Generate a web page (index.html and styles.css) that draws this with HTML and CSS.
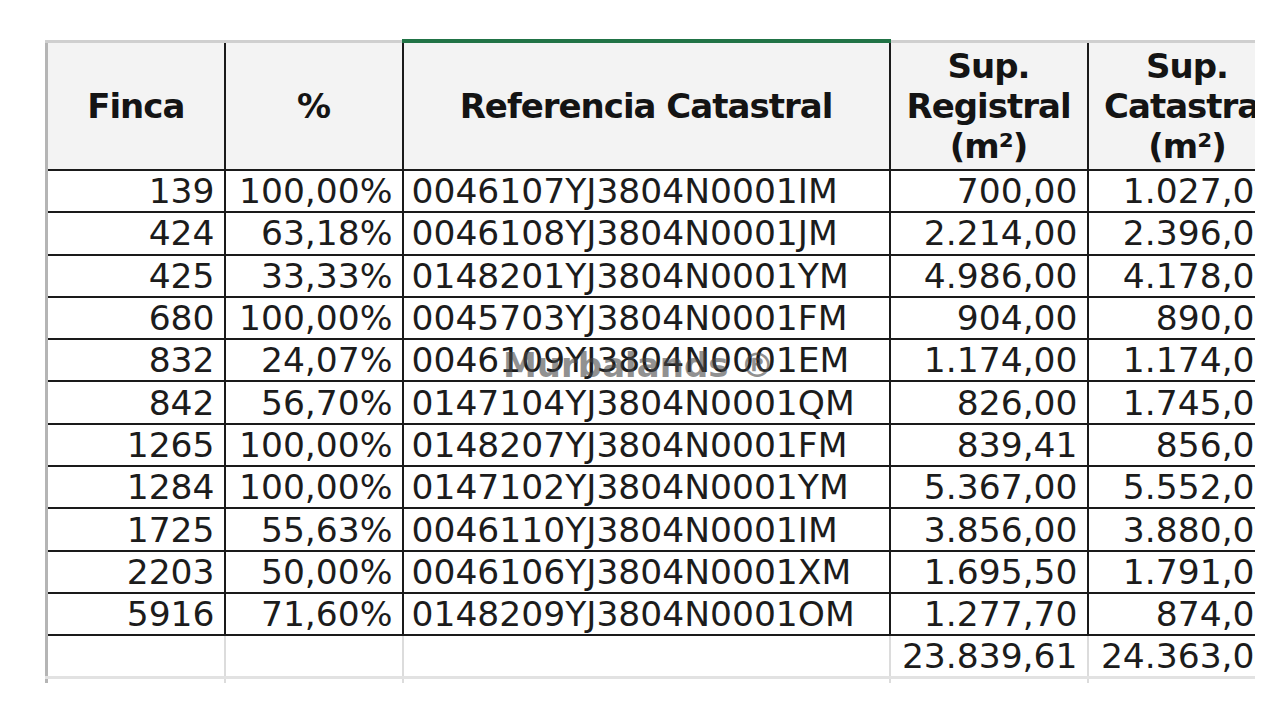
FILE: index.html
```html
<!DOCTYPE html>
<html lang="es">
<head>
<meta charset="utf-8">
<title>Fincas</title>
<link rel="stylesheet" href="styles.css">
</head>
<body>
<div class="sheet">
  <table class="grid">
    <colgroup>
      <col class="c-a"><col class="c-b"><col class="c-c"><col class="c-d"><col class="c-e">
    </colgroup>
    <thead>
      <tr class="head">
        <th class="first">Finca</th>
        <th>%</th>
        <th class="sel">Referencia Catastral</th>
        <th>Sup.<br>Registral<br>(m²)</th>
        <th>Sup.<br>Catastral<br>(m²)</th>
      </tr>
    </thead>
    <tbody>
      <tr><td class="num first">139</td><td class="num">100,00%</td><td class="ref">0046107YJ3804N0001IM</td><td class="num">700,00</td><td class="num">1.027,00</td></tr>
      <tr><td class="num first">424</td><td class="num">63,18%</td><td class="ref">0046108YJ3804N0001JM</td><td class="num">2.214,00</td><td class="num">2.396,00</td></tr>
      <tr><td class="num first">425</td><td class="num">33,33%</td><td class="ref">0148201YJ3804N0001YM</td><td class="num">4.986,00</td><td class="num">4.178,00</td></tr>
      <tr><td class="num first">680</td><td class="num">100,00%</td><td class="ref">0045703YJ3804N0001FM</td><td class="num">904,00</td><td class="num">890,00</td></tr>
      <tr><td class="num first">832</td><td class="num">24,07%</td><td class="ref">0046109YJ3804N0001EM</td><td class="num">1.174,00</td><td class="num">1.174,00</td></tr>
      <tr><td class="num first">842</td><td class="num">56,70%</td><td class="ref">0147104YJ3804N0001QM</td><td class="num">826,00</td><td class="num">1.745,00</td></tr>
      <tr><td class="num first">1265</td><td class="num">100,00%</td><td class="ref">0148207YJ3804N0001FM</td><td class="num">839,41</td><td class="num">856,00</td></tr>
      <tr><td class="num first">1284</td><td class="num">100,00%</td><td class="ref">0147102YJ3804N0001YM</td><td class="num">5.367,00</td><td class="num">5.552,00</td></tr>
      <tr><td class="num first">1725</td><td class="num">55,63%</td><td class="ref">0046110YJ3804N0001IM</td><td class="num">3.856,00</td><td class="num">3.880,00</td></tr>
      <tr><td class="num first">2203</td><td class="num">50,00%</td><td class="ref">0046106YJ3804N0001XM</td><td class="num">1.695,50</td><td class="num">1.791,00</td></tr>
      <tr><td class="num first">5916</td><td class="num">71,60%</td><td class="ref">0148209YJ3804N0001OM</td><td class="num">1.277,70</td><td class="num">874,00</td></tr>
      <tr class="total"><td class="first"></td><td></td><td></td><td class="num">23.839,61</td><td class="num">24.363,00</td></tr>
      <tr class="blank"><td class="first"></td><td></td><td></td><td></td><td></td></tr>
    </tbody>
  </table>
  <div class="watermark">Murbalands ®</div>
</div>
</body>
</html>
```
FILE: styles.css
```css
html, body {
  margin: 0;
  padding: 0;
  background: #ffffff;
}

body {
  font-family: "DejaVu Sans", Verdana, sans-serif;
  color: #1c1c1c;
}

.sheet {
  position: relative;
  margin: 39px 0 0 45px;
  width: 1210px;
  height: 644px;
  overflow: hidden;
}

.grid {
  border-collapse: collapse;
  table-layout: fixed;
  width: 1240px;
}

.c-a { width: 178px; }
.c-b { width: 178px; }
.c-c { width: 487px; }
.c-d { width: 198px; }
.c-e { width: 199px; }

.head th {
  height: 126px;
  padding: 0;
  background: #f3f3f3;
  font-weight: bold;
  font-size: 34px;
  letter-spacing: -1px;
  line-height: 40px;
  text-align: center;
  vertical-align: middle;
  color: #141414;
  border-top: 3px solid #cfcfcf;
  border-left: 2px solid #1a1a1a;
  border-right: 2px solid #1a1a1a;
  border-bottom: 2px solid #1a1a1a;
  white-space: nowrap;
}

.head th.sel {
  border-top: 4px solid #217346;
}

.grid .first {
  border-left: 3px solid #b5b5b5;
}

tbody tr {
  height: 42.3px;
}

tbody td {
  padding: 0 9px;
  font-size: 34.5px;
  line-height: 40px;
  border: 2px solid #1a1a1a;
  white-space: nowrap;
  overflow: hidden;
  color: #1c1c1c;
}

td.num {
  text-align: right;
}

td.ref {
  text-align: left;
  padding-left: 8px;
}

tbody tr.total td {
  border-top: 2px solid #1a1a1a;
  border-left-color: #dcdcdc;
  border-right: 2px solid #dcdcdc;
  border-bottom: 3px solid #e2e2e2;
}

tbody tr.total td.first,
tbody tr.blank td.first {
  border-left: 3px solid #b5b5b5;
}

tbody tr.blank td {
  border-top: 3px solid #e2e2e2;
  border-left-color: #dcdcdc;
  border-right: 2px solid #dcdcdc;
  border-bottom: none;
}

.watermark {
  position: absolute;
  left: 458px;
  top: 306px;
  font-family: "DejaVu Sans", Verdana, sans-serif;
  font-weight: bold;
  font-size: 34px;
  color: rgba(70, 70, 70, 0.6);
  white-space: nowrap;
  pointer-events: none;
}
```
